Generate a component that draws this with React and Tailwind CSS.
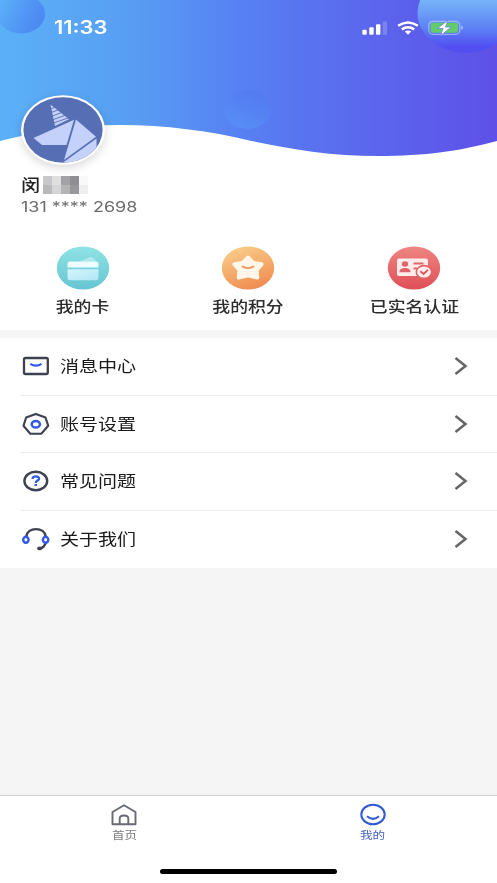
const services = [
  { label: '我的卡', icon: CardIcon },
  { label: '我的积分', icon: StarIcon },
  { label: '已实名认证', icon: VerifiedIcon },
];

const menus = [
  { label: '消息中心', icon: MessageIcon },
  { label: '账号设置', icon: SettingIcon },
  { label: '常见问题', icon: QuestionIcon },
  { label: '关于我们', icon: HeadsetIcon },
];

function CardIcon() {
  return (
    <svg width="54" height="44" viewBox="0 0 54 44">
      <defs>
        <linearGradient id="card-bg" x1="0" y1="0" x2="0" y2="1">
          <stop offset="0" stopColor="#8fe3e4" />
          <stop offset="1" stopColor="#66c5d2" />
        </linearGradient>
        <linearGradient id="card-front" x1="0" y1="0" x2="1" y2="1">
          <stop offset="0" stopColor="#d2f5fb" />
          <stop offset="1" stopColor="#b3e6f5" />
        </linearGradient>
      </defs>
      <ellipse cx="27" cy="22" rx="26.2" ry="21.6" fill="url(#card-bg)" />
      <path d="M23 15.500L34 11.200Q35.500 10.600 36.500 11.600L40.500 15.500Z" fill="#b0eaee" />
      <path d="M14 15.500H40Q42.500 15.500 42.500 18V21.500H11.500V18Q11.500 15.500 14 15.500Z" fill="#effcff" />
      <path d="M11.500 23.200H42.500V32Q42.500 34.300 40 34.300H14Q11.500 34.300 11.500 32Z" fill="url(#card-front)" />
    </svg>
  );
}

function StarIcon() {
  return (
    <svg width="54" height="44" viewBox="0 0 54 44">
      <defs>
        <linearGradient id="star-bg" x1="0.200" y1="0" x2="0.600" y2="1">
          <stop offset="0" stopColor="#f9cf8a" />
          <stop offset="1" stopColor="#f08c51" />
        </linearGradient>
      </defs>
      <ellipse cx="27" cy="22" rx="26.200" ry="21.600" fill="url(#star-bg)" />
      <path
        d="M27 11.500L32.200 16.800L40.600 18.200L35.600 24L36.300 31.600L27 29.200L17.700 31.600L18.400 24L13.400 18.200L21.800 16.800Z"
        fill="#fff6ea"
        stroke="#fff6ea"
        strokeWidth="4"
        strokeLinejoin="round"
      />
      <path d="M21.500 20.600Q27 23.800 32.500 20.600" fill="none" stroke="#ee8e50" strokeWidth="1.700" strokeLinecap="round" />
    </svg>
  );
}

function VerifiedIcon() {
  return (
    <svg width="54" height="44" viewBox="0 0 54 44">
      <defs>
        <linearGradient id="verified-bg" x1="0" y1="0" x2="0" y2="1">
          <stop offset="0" stopColor="#ee8580" />
          <stop offset="1" stopColor="#df4f58" />
        </linearGradient>
      </defs>
      <ellipse cx="27" cy="22" rx="26.200" ry="21.600" fill="url(#verified-bg)" />
      <rect x="10" y="12.600" width="31" height="17.400" rx="2" fill="#ffeceb" />
      <ellipse cx="18" cy="18" rx="3.200" ry="2.700" fill="#e2646a" />
      <path d="M12.300 26.300Q12.500 22 18 22Q23.500 22 23.700 26.300Z" fill="#e2646a" />
      <path d="M26.500 17.500H36.500M26.500 22.500H30" stroke="#e2646a" strokeWidth="1.800" />
      <ellipse cx="37" cy="26" rx="8.500" ry="7.200" fill="#e2646a" />
      <ellipse cx="37" cy="26" rx="6.900" ry="5.600" fill="#ffeceb" />
      <path d="M33.400 25.300L36.600 28L40.900 23.800" fill="none" stroke="#df555c" strokeWidth="1.800" />
    </svg>
  );
}

function MessageIcon() {
  return (
    <svg width="28" height="24" viewBox="0 0 28 24" fill="none">
      <rect x="2" y="4" width="23.800" height="16" rx="1.500" stroke="#3e4150" strokeWidth="2.300" />
      <path d="M8.300 9.800Q13.900 13.600 19.500 9.800" stroke="#3159e4" strokeWidth="2.200" />
    </svg>
  );
}

function SettingIcon() {
  return (
    <svg width="28" height="24" viewBox="0 0 28 24" fill="none">
      <path
        d="M13.800 1.900L23.500 5.600L26.200 13.700L19.300 21.700H8.300L1.500 13.700L4.100 5.600Z"
        stroke="#3e4150"
        strokeWidth="2.100"
        strokeLinejoin="round"
      />
      <ellipse cx="13.800" cy="12.200" rx="4.100" ry="3.300" stroke="#3159e4" strokeWidth="2.500" />
    </svg>
  );
}

function QuestionIcon() {
  return (
    <svg width="28" height="24" viewBox="0 0 28 24" fill="none">
      <ellipse cx="13.800" cy="12" rx="11.400" ry="9.200" stroke="#3e4150" strokeWidth="2.400" />
      <path
        d="M10.600 9.900C10.600 6.700 17.100 6.700 17.100 9.700C17.100 11.600 13.700 11.400 13.700 13.900"
        stroke="#3159e4"
        strokeWidth="2.300"
      />
      <path d="M12.500 15H15V17H12.500Z" fill="#3159e4" />
    </svg>
  );
}

function HeadsetIcon() {
  return (
    <svg width="28" height="24" viewBox="0 0 28 24" fill="none">
      <path d="M4.300 9.500C5 4.800 9 2.100 14 2.100S23 4.800 23.700 9.500" stroke="#3e4150" strokeWidth="2.400" />
      <path d="M23.700 15.500Q22.500 20.800 17.500 21.500" stroke="#3e4150" strokeWidth="2.400" />
      <ellipse cx="17.600" cy="21.400" rx="2.500" ry="1.900" fill="#3e4150" />
      <ellipse cx="3.900" cy="12.800" rx="2.700" ry="3" stroke="#3159e4" strokeWidth="2.400" />
      <ellipse cx="23.600" cy="12.800" rx="2.700" ry="3" stroke="#3159e4" strokeWidth="2.400" />
    </svg>
  );
}

function Avatar() {
  return (
    <svg className="drop-shadow-[0_3px_5px_rgba(0,0,0,0.15)]" width="84" height="70" viewBox="0 0 84 70">
      <defs>
        <clipPath id="avatar-clip">
          <ellipse cx="42" cy="35" rx="39.600" ry="32.800" />
        </clipPath>
      </defs>
      <ellipse cx="42" cy="35" rx="42" ry="34.800" fill="#fff" />
      <g clipPath="url(#avatar-clip)">
        <rect width="84" height="70" fill="#566eb3" />
        <g fill="#c3d1fb">
          <path d="M29.500 9.500L48 24.300L34 31Z" />
          <path d="M12.500 43L53 24.700L45.500 50H21Z" />
          <path d="M55 24.500L75 41.700L43 65Z" />
          <path d="M75.500 43.500V70H40L43.500 66.500Z" />
        </g>
        <path
          d="M29 14.500L34 12M29 18L38 14.500M30 21.500L42 17M31 25L45 20M31 28.500L48 22.700"
          stroke="#566eb3"
          strokeWidth="0.900"
        />
      </g>
    </svg>
  );
}

function HeaderBackground() {
  return (
    <svg className="absolute inset-x-0 top-0" width="497" height="160" viewBox="0 0 497 160">
      <defs>
        <linearGradient id="sky" x1="0" y1="0" x2="1" y2="0">
          <stop offset="0" stopColor="#5bb0f8" />
          <stop offset="0.250" stopColor="#589ff3" />
          <stop offset="0.500" stopColor="#577ff3" />
          <stop offset="0.750" stopColor="#5b66ed" />
          <stop offset="1" stopColor="#5e50e8" />
        </linearGradient>
        <linearGradient id="bubble-left" x1="0" y1="0.200" x2="1" y2="0.600">
          <stop offset="0.150" stopColor="#59acf7" />
          <stop offset="0.600" stopColor="#5196f4" />
          <stop offset="1" stopColor="#4c87f2" />
        </linearGradient>
        <linearGradient id="bubble-mid" x1="0.200" y1="1" x2="0.800" y2="0">
          <stop offset="0" stopColor="#578ff5" />
          <stop offset="1" stopColor="#5478f0" />
        </linearGradient>
        <linearGradient id="bubble-right" x1="0" y1="0" x2="0" y2="1">
          <stop offset="0.350" stopColor="#75b2f8" />
          <stop offset="0.700" stopColor="#5c80f4" />
          <stop offset="0.920" stopColor="#524ff1" />
        </linearGradient>
        <clipPath id="wave">
          <path d="M0 0H497V141C460 151 425 156 378 156C330 156 290 149 247 140C210 131 165 125 120 125C75 125 35 132 0 141Z" />
        </clipPath>
      </defs>
      <g clipPath="url(#wave)">
        <rect width="497" height="160" fill="url(#sky)" />
        <ellipse cx="21" cy="14" rx="24" ry="19.500" fill="url(#bubble-left)" />
        <ellipse cx="247.500" cy="109.500" rx="23.500" ry="19.500" fill="url(#bubble-mid)" />
        <ellipse cx="466" cy="13" rx="48.500" ry="40" fill="url(#bubble-right)" />
      </g>
    </svg>
  );
}

function StatusBar() {
  return (
    <div className="relative flex h-[55px] items-center justify-between pl-[54px] pr-[33px] text-white">
      <span className="origin-left scale-x-[1.220] font-['Inter'] text-[18px] font-semibold leading-none">11:33</span>
      <div className="flex items-center">
        <svg width="26" height="14" viewBox="0 0 26 14" fill="#fff">
          <rect x="0.300" y="8.800" width="4.400" height="5" rx="1" />
          <rect x="7.300" y="6.300" width="4.400" height="7.500" rx="1" />
          <rect x="14" y="3.200" width="4.400" height="10.600" rx="1" />
          <rect x="20.700" y="0.500" width="4.400" height="13.300" rx="1" opacity="0.200" />
        </svg>
        <svg className="ml-[9px]" width="22" height="14" viewBox="0 0 22 14" fill="none" stroke="#fff" strokeWidth="2.600">
          <path d="M1.200 4.800Q11 -1.900 20.800 4.800" />
          <path d="M4.800 8.300Q11 4.300 17.200 8.300" />
          <path d="M7.800 10.500Q11 8.500 14.200 10.500L11 13.700Z" fill="#fff" stroke="none" />
        </svg>
        <svg className="ml-[9px]" width="36" height="16" viewBox="0 0 36 16">
          <rect x="0.800" y="1.300" width="31" height="13" rx="4" fill="none" stroke="#fff" strokeOpacity="0.400" strokeWidth="1.200" />
          <rect x="2.600" y="2.800" width="27.400" height="10" rx="2.300" fill="#63cb6c" />
          <path d="M33.300 5.500V10Q35 9.300 35 7.700T33.300 5.500Z" fill="#fff" opacity="0.500" />
          <path d="M19.700 0.400L9.500 8.500H15L12.500 15.700L23.200 7H17.500Z" fill="#fff" stroke="#5c7be8" strokeWidth="0.700" />
        </svg>
      </div>
    </div>
  );
}

// Blurred part of the user's name
function MaskedName() {
  return (
    <div className="grid w-[45px] grid-cols-5 grid-rows-2">
      <i className="h-[9px] bg-[#c8c8ca]" />
      <i className="h-[9px] bg-[#dfdfe0]" />
      <i className="h-[9px] bg-[#a3a3a7]" />
      <i className="h-[9px] bg-[#8e8e93]" />
      <i className="h-[9px] bg-[#f9f9f9]" />
      <i className="h-[9px] bg-[#b9b9bc]" />
      <i className="h-[9px] bg-[#d5d5d7]" />
      <i className="h-[9px] bg-[#b4b4b7]" />
      <i className="h-[9px] bg-[#98989c]" />
      <i className="h-[9px] bg-[#efefef]" />
    </div>
  );
}

export default function App() {
  return (
    <div className="flex h-[883px] w-[497px] flex-col overflow-hidden bg-[#f5f5f5] font-['Noto_Sans_CJK_SC',sans-serif]">
      <header className="relative h-[330px] bg-white">
        <HeaderBackground />
        <StatusBar />

        {/* User info */}
        <div className="relative mt-[40px] pl-[20.500px]">
          <Avatar />
          <div className="mt-[10px] flex h-[20px] items-center">
            <span className="w-[22px] origin-left scale-x-[1.200] pb-[2px] text-[16px] font-medium leading-none text-[#222]">
              闵
            </span>
            <MaskedName />
          </div>
          <p className="mt-[2px] h-[20px] w-fit origin-left scale-x-[1.285] whitespace-pre font-['Inter'] text-[14px] leading-[20px] text-[#6c6c6c]">
            131 **** 2698
          </p>
        </div>

        {/* Services */}
        <div className="mt-[29px] grid grid-cols-3">
          {services.map(({ label, icon: Icon }) => (
            <div key={label} className="flex flex-col items-center">
              <Icon />
              <span className="mt-[6px] scale-x-[1.190] text-[15px] font-medium leading-[20px] text-[#2c2c2c]">{label}</span>
            </div>
          ))}
        </div>
      </header>

      {/* Menu */}
      <nav className="mt-2 bg-white">
        {menus.map(({ label, icon: Icon }, i) => (
          <div
            key={label}
            className={`ml-[20px] flex h-[57.500px] items-center pl-[2px] pr-[29px] ${i < 3 ? 'border-b border-[#eeeeee]' : ''}`}
          >
            <Icon />
            <span className="ml-[10px] origin-left scale-x-[1.190] pb-[2px] text-[16px] leading-none text-[#1a1a1a]">{label}</span>
            <svg className="ml-auto" width="14" height="18" viewBox="0 0 14 18" fill="none">
              <path d="M1.500 1L11.500 9L1.500 17" stroke="#656565" strokeWidth="2.500" />
            </svg>
          </div>
        ))}
      </nav>

      {/* Tab bar */}
      <footer className="mt-auto flex h-[88px] flex-col items-center justify-between border-t border-[#cfcfcf] bg-white pb-[9px]">
        <div className="grid w-full grid-cols-2 pt-[7px] text-[10.500px] leading-[14px]">
          <div className="flex flex-col items-center text-[#7d7d7d]">
            <svg width="28" height="24" viewBox="0 0 28 24" fill="none" stroke="#686b75" strokeWidth="1.900" strokeLinejoin="round">
              <path d="M2.500 9L14 2.300L25.500 9V21.200H2.500Z" />
              <path d="M9.700 21V15.500Q9.700 12.500 14 12.500T18.300 15.500V21" />
            </svg>
            <span className="mt-[1px] scale-x-[1.200]">首页</span>
          </div>
          <div className="flex flex-col items-center text-[#4666c2]">
            <svg width="28" height="24" viewBox="0 0 28 24" fill="none" stroke="#3159d4" strokeWidth="2">
              <ellipse cx="14" cy="11.500" rx="11.700" ry="9.700" />
              <path d="M8 13.300Q14 18.500 20 13.300" />
            </svg>
            <span className="mt-[1px] scale-x-[1.200]">我的</span>
          </div>
        </div>
        <div className="h-[5px] w-[177px] rounded-full bg-black" />
      </footer>
    </div>
  );
}
